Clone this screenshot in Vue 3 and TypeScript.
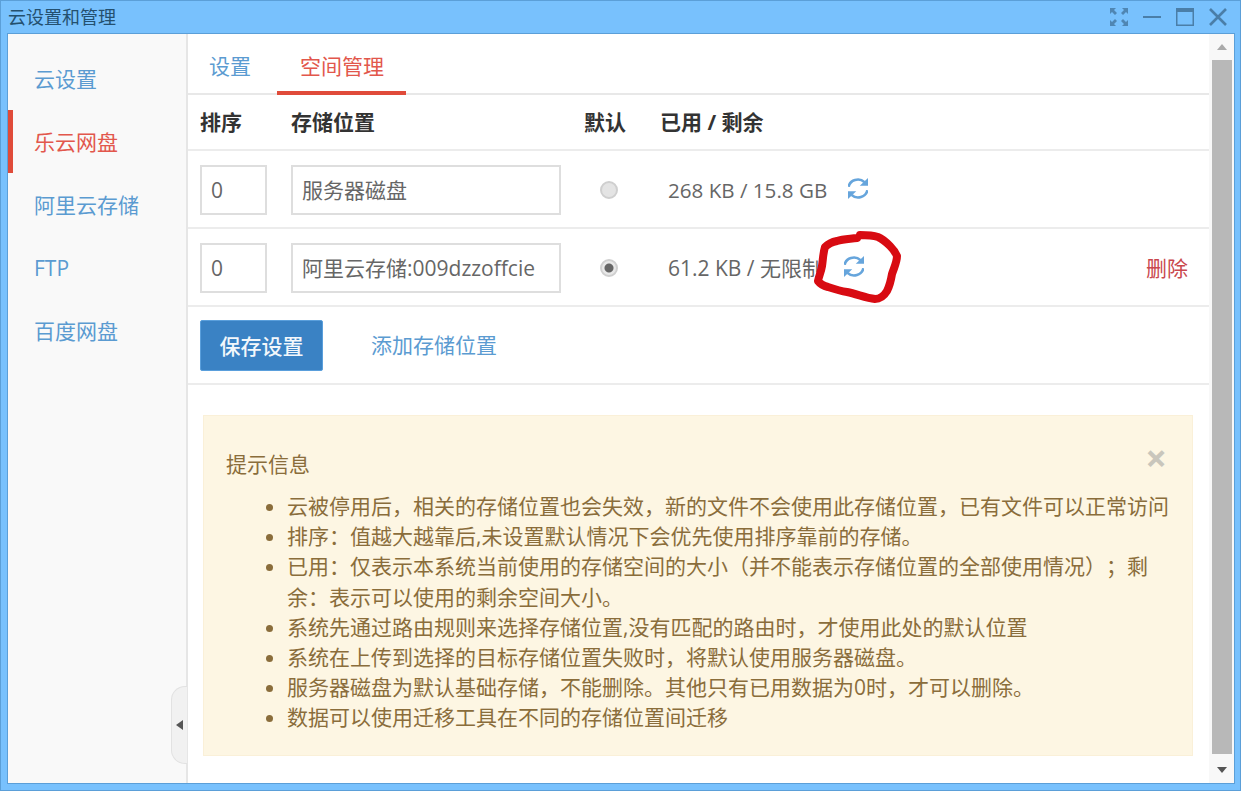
<script setup lang="ts">
interface Row { order: string; place: string; usage: string; checked: boolean; removable: boolean }

const navItems = ['云设置', '乐云网盘', '阿里云存储', 'FTP', '百度网盘']
const activeNav = '乐云网盘'

const rows: Row[] = [
  { order: '0', place: '服务器磁盘', usage: '268 KB / 15.8 GB', checked: false, removable: false },
  { order: '0', place: '阿里云存储:009dzzoffcie', usage: '61.2 KB / 无限制', checked: true, removable: true },
]

const tips = [
  '云被停用后，相关的存储位置也会失效，新的文件不会使用此存储位置，已有文件可以正常访问',
  '排序：值越大越靠后,未设置默认情况下会优先使用排序靠前的存储。',
  '已用：仅表示本系统当前使用的存储空间的大小（并不能表示存储位置的全部使用情况）；剩余：表示可以使用的剩余空间大小。',
  '系统先通过路由规则来选择存储位置,没有匹配的路由时，才使用此处的默认位置',
  '系统在上传到选择的目标存储位置失败时，将默认使用服务器磁盘。',
  '服务器磁盘为默认基础存储，不能删除。其他只有已用数据为0时，才可以删除。',
  '数据可以使用迁移工具在不同的存储位置间迁移',
]
</script>

<template>
  <div class="window">
    <header class="titlebar">
      <span class="title">云设置和管理</span>
      <div class="controls">
        <svg width="20" height="20" viewBox="0 0 20 20" class="ctl">
          <path d="M1 1h6L5 3l3 3-2 2-3-3-2 2zM19 1v6l-2-2-3 3-2-2 3-3-2-2zM1 19v-6l2 2 3-3 2 2-3 3 2 2zM19 19h-6l2-2-3-3 2-2 3 3 2-2z" fill="#4f86b3" />
        </svg>
        <svg width="20" height="20" viewBox="0 0 20 20" class="ctl">
          <rect x="1" y="9" width="18" height="2" fill="#4a7ea8" />
        </svg>
        <svg width="20" height="20" viewBox="0 0 20 20" class="ctl">
          <path d="M1 1h18v18H1zM2.500 5v12.500h15V5z" fill="#4a7ea8" fill-rule="evenodd" />
        </svg>
        <svg width="20" height="20" viewBox="0 0 20 20" class="ctl">
          <path d="M2 2l16 16M18 2L2 18" stroke="#4a7ea8" stroke-width="2.600" fill="none" />
        </svg>
      </div>
    </header>

    <div class="body">
      <nav class="sidebar">
        <a v-for="item in navItems" :key="item" class="nav-item" :class="{ active: item === activeNav }">{{ item }}</a>
        <div class="collapse"><i class="collapse-arrow"></i></div>
      </nav>

      <main class="content">
        <div class="tabs">
          <a class="tab">设置</a>
          <a class="tab tab-active">空间管理</a>
        </div>

        <div class="grid-row head">
          <span>排序</span>
          <span>存储位置</span>
          <span>默认</span>
          <span>已用 / 剩余</span>
        </div>

        <div v-for="row in rows" :key="row.place" class="grid-row item">
          <div class="field field-order">{{ row.order }}</div>
          <div class="field field-place">{{ row.place }}</div>
          <div class="radio-cell"><span class="radio" :class="{ on: row.checked }"></span></div>
          <div class="usage">
            <span class="usage-text" :class="{ cjk: row.removable }">{{ row.usage }}</span>
            <span class="refresh-wrap">
              <!-- two arcs with arrow heads -->
              <svg class="refresh" width="20" height="21" viewBox="2.500 1.500 17 19" preserveAspectRatio="none">
                <path d="M3 9.500A8 8 0 0 1 16.500 5.300" fill="none" stroke="#66a5dc" stroke-width="2.300" />
                <path d="M19.500 1.500v7h-7z" fill="#66a5dc" />
                <path d="M19 12.500A8 8 0 0 1 5.500 16.700" fill="none" stroke="#66a5dc" stroke-width="2.300" />
                <path d="M2.500 20.500v-7h7z" fill="#66a5dc" />
              </svg>
              <svg v-if="row.removable" class="scribble" width="95" height="84" viewBox="0 0 95 84">
                <path d="M47 13C40 14 33 14 27 16 22 17 18 19 15 22 13 28 13 35 12 41 11 47 9 51 8 56 11 60 14 61 18 62 24 64 30 66 37 67 47 69 56 73 65 74 71 74 74 71 77 66 80 60 81 55 82 49 84 43 87 37 87 31 85 26 83 24 80 21 76 17 73 14 68 12 62 10 56 10 50 10" fill="none" stroke="#d80b12" stroke-width="8" stroke-linecap="round" stroke-linejoin="round" />
              </svg>
            </span>
            <a v-if="row.removable" class="delete">删除</a>
          </div>
        </div>

        <div class="actions">
          <button class="save" type="button">保存设置</button>
          <a class="add">添加存储位置</a>
        </div>

        <section class="notice">
          <span class="notice-close">×</span>
          <h4 class="notice-title">提示信息</h4>
          <ul class="notice-list">
            <li v-for="tip in tips" :key="tip">{{ tip }}</li>
          </ul>
        </section>
      </main>

      <aside class="scrollbar">
        <i class="arrow-up"></i>
        <div class="thumb"></div>
        <i class="arrow-down"></i>
      </aside>
    </div>
  </div>
</template>

<style>
body { margin: 0; }
</style>

<style scoped>
.window {
  width: 1241px;
  height: 791px;
  box-sizing: border-box;
  display: flex;
  flex-direction: column;
  background: #78c1fd;
  border: 1px solid #5b9fd8;
  font-family: "Open Sans", "Noto Sans CJK SC", sans-serif;
  text-spacing-trim: space-all;
  overflow: hidden;
}
.titlebar {
  height: 32px;
  flex: none;
  display: flex;
  align-items: center;
  justify-content: space-between;
  padding: 0 12px 0 7px;
}
.title { font-size: 18px; color: #24506f; margin-top: -2px; }
.controls { display: flex; gap: 13px; margin-top: -1px; }
.ctl { display: block; }

.body {
  flex: 1;
  min-height: 0;
  display: flex;
  margin: 0 5px 6px 6px;
  background: #fff;
  border: 1px solid #5b9fd8;
}

.sidebar {
  width: 180px;
  flex: none;
  position: relative;
  box-sizing: border-box;
  background: #f9f9f9;
  border-right: 2px solid #e6e6e6;
  padding-top: 13px;
  display: flex;
  flex-direction: column;
}
.nav-item {
  height: 63px;
  display: flex;
  align-items: center;
  padding-left: 26px;
  font-size: 21px;
  line-height: 30px;
  color: #5b9bd1;
}
.nav-item.active {
  color: #e2574c;
  box-shadow: inset 5px 0 0 #e04b3a;
}
.collapse {
  position: absolute;
  right: -1px;
  top: 652px;
  width: 15px;
  height: 76px;
  background: #f1f1f1;
  border: 1px solid #e2e2e2;
  border-right: 0;
  border-radius: 14px 0 0 14px;
  display: flex;
  align-items: center;
  justify-content: center;
}
.collapse-arrow {
  border: 5px solid transparent;
  border-right: 7px solid #555;
  border-left: 0;
}

.content {
  flex: 1;
  min-width: 0;
  box-sizing: border-box;
  background: #fff;
}
.tabs {
  height: 61px;
  box-sizing: border-box;
  display: flex;
  border-bottom: 2px solid #e8e8e8;
}
.tab {
  height: 61px;
  box-sizing: border-box;
  padding: 13px 21px 0;
  font-size: 21px;
  line-height: 38px;
  color: #5b9bd1;
}
.tab-active {
  color: #e2574c;
  margin-left: 5px;
  padding: 13px 22px 0 23px;
  border-bottom: 4px solid #e04b3a;
}

.grid-row {
  display: grid;
  grid-template-columns: 91px 293px 76px 1fr;
  align-items: center;
  padding-left: 12px;
  border-bottom: 2px solid #ececec;
}
.head {
  height: 56px;
  box-sizing: border-box;
  padding-bottom: 2px;
  font-size: 21px;
  font-weight: 700;
  color: #333;
}
.item { height: 78px; padding-top: 2px; box-sizing: border-box; }
.field {
  height: 50px;
  box-sizing: border-box;
  border: 2px solid #dedede;
  padding: 0 9px;
  line-height: 46px;
  font-size: 21px;
  color: #666;
  background: #fff;
  white-space: nowrap;
  overflow: hidden;
}
.field-order { width: 67px; }
.field-place { width: 270px; }
.radio-cell { padding-left: 16px; }
.radio {
  display: block;
  width: 18px;
  height: 18px;
  box-sizing: border-box;
  border-radius: 50%;
  background: #e4e4e4;
  border: 2px solid #cfcfcf;
}
.radio.on {
  background: radial-gradient(circle, #666 0, #666 4px, #e8e8e8 5px);
}
.usage {
  display: flex;
  align-items: center;
  padding-left: 8px;
  font-size: 20.600px;
  color: #666;
}
.usage-text { white-space: nowrap; }
.usage-text.cjk { font-size: 21px; margin-top: -2px; }
.refresh-wrap {
  position: relative;
  display: flex;
  margin: -3px 0 0 21px;
}
.refresh { display: block; }
.scribble {
  position: absolute;
  left: -34px;
  top: -31px;
  pointer-events: none;
}
.delete {
  margin: -3px 21px 0 auto;
  color: #c9474d;
  font-size: 21px;
}

.actions {
  height: 78px;
  box-sizing: border-box;
  display: flex;
  align-items: center;
  padding-left: 12px;
  border-bottom: 2px solid #ececec;
}
.save {
  width: 123px;
  height: 51px;
  border: 1px solid #5a9fdc;
  border-radius: 2px;
  background: #3a82c4;
  color: #f2f7fb;
  font: inherit;
  font-size: 21px;
  font-weight: 500;
  padding: 0;
}
.add {
  margin: -2px 0 0 48px;
  font-size: 21px;
  color: #5b9bd1;
}

.notice {
  position: relative;
  margin: 30px 16px 0 15px;
  height: 341px;
  box-sizing: border-box;
  background: #fdf6e3;
  border: 1px solid #faf0d8;
  padding: 33px 20px 0 22px;
  color: #8a6d3b;
}
.notice-close {
  position: absolute;
  right: 25px;
  top: 21px;
  font-size: 38px;
  line-height: 40px;
  font-weight: 700;
  color: #c9c6bc;
}
.notice-title {
  margin: 0;
  font-size: 21px;
  font-weight: 400;
  line-height: 30px;
}
.notice-list {
  margin: 12px 0 0;
  padding-left: 61px;
  padding-right: 0;
  font-size: 21px;
  line-height: 30.200px;
}

.scrollbar {
  width: 25px;
  flex: none;
  background: #f8f8f8;
  display: flex;
  flex-direction: column;
  align-items: center;
}
.arrow-up {
  margin-top: 10px;
  border: 5px solid transparent;
  border-bottom: 6px solid #aaa;
  border-top: 0;
}
.thumb {
  width: 20px;
  height: 694px;
  margin-top: 10px;
  background: #b8b8b8;
}
.arrow-down {
  margin-top: 13px;
  border: 5px solid transparent;
  border-top: 6px solid #555;
  border-bottom: 0;
}
</style>
